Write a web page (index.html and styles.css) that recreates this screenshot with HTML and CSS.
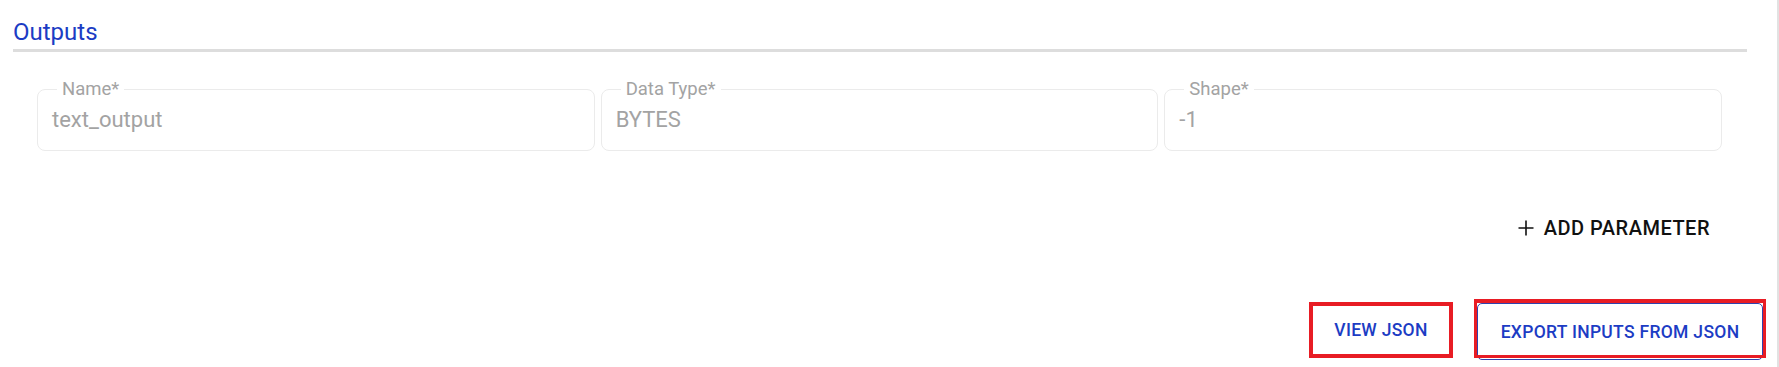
FILE: index.html
```html
<!DOCTYPE html>
<html lang="en">
<head>
  <meta charset="UTF-8">
  <title>Outputs</title>
  <link rel="stylesheet" href="styles.css">
</head>
<body>

  <div class="main">

    <div class="section-head">
      <h2>Outputs</h2>
    </div>

    <div class="fields">
      <fieldset class="field">
        <legend>Name*</legend>
        <div class="value">text_output</div>
      </fieldset>
      <fieldset class="field">
        <legend>Data Type*</legend>
        <div class="value">BYTES</div>
      </fieldset>
      <fieldset class="field">
        <legend>Shape*</legend>
        <div class="value">-1</div>
      </fieldset>
    </div>

    <div class="add-row">
      <button class="add-btn">
        <svg width="16" height="16" viewBox="0 0 16 16">
          <path d="M8 0.5v15M0.5 8h15" stroke="#111" stroke-width="1.6" fill="none"/>
        </svg>
        Add Parameter
      </button>
    </div>

    <div class="actions">
      <button class="view-btn">View JSON</button>
      <div class="export-wrap">
        <button class="export-btn">Export Inputs From JSON</button>
      </div>
    </div>

  </div>

</body>
</html>
```

FILE: styles.css
```css
body {
  font-family: Roboto, 'Liberation Sans', sans-serif;
  background-color: #ffffff;
  color: #111;
  margin: 0;
  padding: 0;
  overflow: hidden;
}

.main {
  width: 1777px;
  height: 100vh;
  border-right: 2px solid #e2e2e2;
}

.section-head {
  margin: 0 30px 0 13px;
  padding-top: 18px;
  padding-bottom: 3px;
  border-bottom: 3px solid #dddddd;
}

.section-head h2 {
  margin: 0;
  font-size: 24px;
  line-height: 28px;
  font-weight: 400;
  color: #1c3cc4;
}

.fields {
  display: grid;
  grid-template-columns: repeat(3, 1fr);
  gap: 6px;
  margin: 27px 55px 0 37px;
}

.field {
  margin: 0;
  min-width: 0;
  padding: 8px 14px 17px;
  border: 1px solid #ebebeb;
  border-radius: 8px;
}

.field legend {
  margin-left: 5px;
  padding: 0 5px;
  font-size: 18.5px;
  line-height: 20px;
  color: #a3a3a3;
}

.field .value {
  font-size: 22px;
  line-height: 26px;
  color: #a3a3a3;
}

.add-row {
  display: flex;
  justify-content: flex-end;
  margin: 55px 55px 0 37px;
}

.add-btn {
  display: flex;
  align-items: center;
  gap: 10px;
  height: 44px;
  padding: 0 12px;
  background: transparent;
  border: none;
  font-family: inherit;
  font-size: 20px;
  font-weight: 500;
  letter-spacing: 0.5px;
  text-transform: uppercase;
  color: #111;
  cursor: pointer;
}

.actions {
  display: flex;
  justify-content: flex-end;
  align-items: flex-start;
  gap: 24px;
  margin-top: 52px;
  padding-right: 14px;
}

.view-btn,
.export-btn {
  font-family: inherit;
  font-size: 17.5px;
  font-weight: 500;
  letter-spacing: 0.3px;
  text-transform: uppercase;
  color: #1c3cc4;
  background: #fff;
  cursor: pointer;
}

.view-btn {
  width: 144px;
  height: 56px;
  border: none;
  padding: 0;
  outline: 4px solid #e81c24;
  outline-offset: -4px;
}

.export-wrap {
  position: relative;
  margin-top: 1px;
}

.export-btn {
  display: block;
  width: 286px;
  height: 57px;
  padding: 0;
  border: 1.5px solid #2f42ae;
  border-radius: 5px;
}

/* red highlight box drawn over the button */
.export-wrap::after {
  content: "";
  position: absolute;
  top: -4px;
  left: -3px;
  right: -3px;
  bottom: 2px;
  border: 3px solid #e81c24;
  border-top-width: 4px;
  pointer-events: none;
}
```
